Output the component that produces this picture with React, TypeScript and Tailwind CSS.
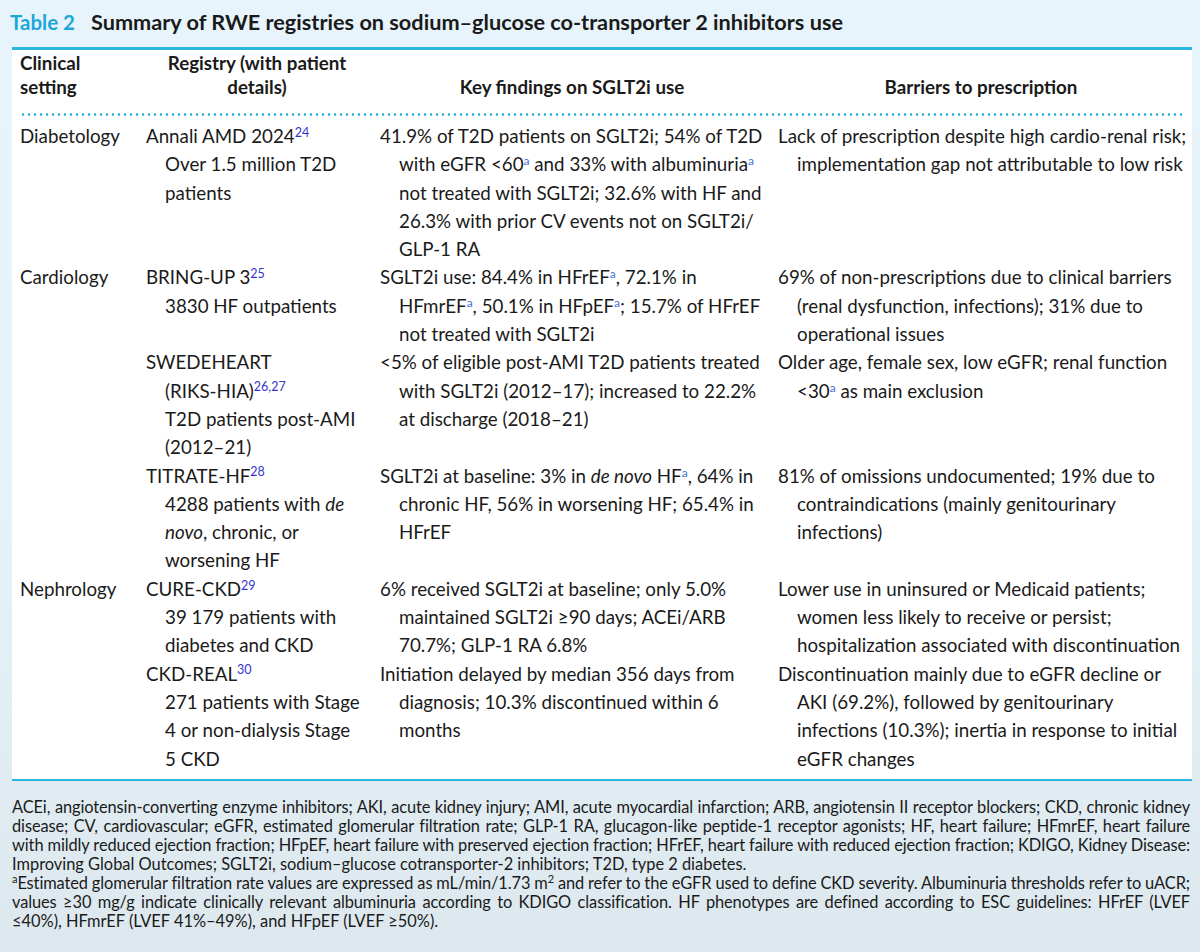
import type { ReactNode } from "react";

const Ref = ({ n }: { n: string }) => <sup className="text-[12.5px] text-[#3434cf]">{n}</sup>;
const A = () => <sup className="text-[12px] text-[#3f6fd8]">a</sup>;

type Sub = { reg: ReactNode[]; find: ReactNode[]; bar: ReactNode[] };
type Group = { setting: string; subs: Sub[] };

const groups: Group[] = [
  {
    setting: "Diabetology",
    subs: [
      {
        reg: [<>Annali AMD 2024<Ref n="24" /></>, "Over 1.5 million T2D", "patients"],
        find: [
          "41.9% of T2D patients on SGLT2i; 54% of T2D",
          <>with eGFR &lt;60<A /> and 33% with albuminuria<A /></>,
          "not treated with SGLT2i; 32.6% with HF and",
          "26.3% with prior CV events not on SGLT2i/",
          "GLP-1 RA",
        ],
        bar: ["Lack of prescription despite high cardio-renal risk;", "implementation gap not attributable to low risk"],
      },
    ],
  },
  {
    setting: "Cardiology",
    subs: [
      {
        reg: [<>BRING-UP 3<Ref n="25" /></>, "3830 HF outpatients"],
        find: [
          <>SGLT2i use: 84.4% in HFrEF<A />, 72.1% in</>,
          <>HFmrEF<A />, 50.1% in HFpEF<A />; 15.7% of HFrEF</>,
          "not treated with SGLT2i",
        ],
        bar: ["69% of non-prescriptions due to clinical barriers", "(renal dysfunction, infections); 31% due to", "operational issues"],
      },
      {
        reg: ["SWEDEHEART", <>(RIKS-HIA)<Ref n="26,27" /></>, "T2D patients post-AMI", "(2012–21)"],
        find: [
          "<5% of eligible post-AMI T2D patients treated",
          "with SGLT2i (2012–17); increased to 22.2%",
          "at discharge (2018–21)",
        ],
        bar: ["Older age, female sex, low eGFR; renal function", <>&lt;30<A /> as main exclusion</>],
      },
      {
        reg: [
          <>TITRATE-HF<Ref n="28" /></>,
          <>4288 patients with <i>de</i></>,
          <><i>novo</i>, chronic, or</>,
          "worsening HF",
        ],
        find: [
          <>SGLT2i at baseline: 3% in <i>de novo</i> HF<A />, 64% in</>,
          "chronic HF, 56% in worsening HF; 65.4% in",
          "HFrEF",
        ],
        bar: ["81% of omissions undocumented; 19% due to", "contraindications (mainly genitourinary", "infections)"],
      },
    ],
  },
  {
    setting: "Nephrology",
    subs: [
      {
        reg: [<>CURE-CKD<Ref n="29" /></>, "39 179 patients with", "diabetes and CKD"],
        find: ["6% received SGLT2i at baseline; only 5.0%", "maintained SGLT2i ≥90 days; ACEi/ARB", "70.7%; GLP-1 RA 6.8%"],
        bar: [
          "Lower use in uninsured or Medicaid patients;",
          "women less likely to receive or persist;",
          "hospitalization associated with discontinuation",
        ],
      },
      {
        reg: [<>CKD-REAL<Ref n="30" /></>, "271 patients with Stage", "4 or non-dialysis Stage", "5 CKD"],
        find: ["Initiation delayed by median 356 days from", "diagnosis; 10.3% discontinued within 6", "months"],
        bar: [
          "Discontinuation mainly due to eGFR decline or",
          "AKI (69.2%), followed by genitourinary",
          "infections (10.3%); inertia in response to initial",
          "eGFR changes",
        ],
      },
    ],
  },
];

function Cell({ lines }: { lines: ReactNode[] }) {
  return (
    <div className="whitespace-nowrap">
      {lines.map((l, i) => (
        <div key={i} className={i > 0 ? "pl-[19px]" : ""}>
          {l}
        </div>
      ))}
    </div>
  );
}

const cols = "grid grid-cols-[126px_234px_398px_1fr]";

const notes: { text: ReactNode; justify: boolean }[] = [
  {
    text: "ACEi, angiotensin-converting enzyme inhibitors; AKI, acute kidney injury; AMI, acute myocardial infarction; ARB, angiotensin II receptor blockers; CKD, chronic kidney",
    justify: true,
  },
  {
    text: "disease; CV, cardiovascular; eGFR, estimated glomerular filtration rate; GLP-1 RA, glucagon-like peptide-1 receptor agonists; HF, heart failure; HFmrEF, heart failure",
    justify: true,
  },
  {
    text: "with mildly reduced ejection fraction; HFpEF, heart failure with preserved ejection fraction; HFrEF, heart failure with reduced ejection fraction; KDIGO, Kidney Disease:",
    justify: true,
  },
  { text: "Improving Global Outcomes; SGLT2i, sodium–glucose cotransporter-2 inhibitors; T2D, type 2 diabetes.", justify: false },
  {
    text: (
      <>
        <sup className="text-[11px]">a</sup>Estimated glomerular filtration rate values are expressed as mL/min/1.73 m
        <sup className="text-[11px]">2</sup> and refer to the eGFR used to define CKD severity. Albuminuria thresholds refer to uACR;
      </>
    ),
    justify: true,
  },
  {
    text: "values ≥30 mg/g indicate clinically relevant albuminuria according to KDIGO classification. HF phenotypes are defined according to ESC guidelines: HFrEF (LVEF",
    justify: true,
  },
  { text: "≤40%), HFmrEF (LVEF 41%–49%), and HFpEF (LVEF ≥50%).", justify: false },
];

export default function App() {
  return (
    <div className="w-[1200px] h-[952px] overflow-hidden bg-linear-to-b from-[#e7f4fb] via-[#e6f3fa] to-[#dde8ee] font-['Lato',sans-serif] text-[#1a1a1a]">
      <div className="h-[47px] pl-[10px] pt-[6px] font-bold flex items-baseline gap-[16px]">
        <span className="text-[20.5px] text-[#1ba7da]">Table 2</span>
        <span className="text-[21.7px]">Summary of RWE registries on sodium–glucose co-transporter 2 inhibitors use</span>
      </div>

      <div className="ml-[12px] w-[1180px] bg-white border-t-[3px] border-b-[2px] border-[#2cb4e2] px-[8px]">
        <div className={`${cols} pt-[1px] text-[18.75px] font-bold leading-[24px] items-end`}>
          <div>
            Clinical
            <br />
            setting
          </div>
          <div className="text-center pr-[14px] pl-[2px]">
            Registry (with patient
            <br />
            details)
          </div>
          <div className="text-center pr-[14px]">Key findings on SGLT2i use</div>
          <div className="text-center">Barriers to prescription</div>
        </div>
        <div className="mt-[14px] h-[3px] bg-[radial-gradient(circle,#35b5e2_1px,transparent_1.6px)] bg-[length:6px_3px]" />

        <div className="pt-[6px] pb-[6px] text-[18.75px] leading-[28.3px]">
          {groups.map((g) =>
            g.subs.map((s, i) => (
              <div key={g.setting + i} className={cols}>
                <div>{i === 0 ? g.setting : ""}</div>
                <Cell lines={s.reg} />
                <Cell lines={s.find} />
                <Cell lines={s.bar} />
              </div>
            ))
          )}
        </div>
      </div>

      <div className="pl-[12px] pr-[10px] pt-[16px] text-[16.4px] leading-[19px]">
        {notes.map((n, i) => (
          <div
            key={i}
            className={
              n.justify
                ? "whitespace-nowrap text-justify [text-align-last:justify] [word-spacing:-2.5px] tracking-[-0.1px]"
                : "whitespace-nowrap"
            }
          >
            {n.text}
          </div>
        ))}
      </div>
    </div>
  );
}
